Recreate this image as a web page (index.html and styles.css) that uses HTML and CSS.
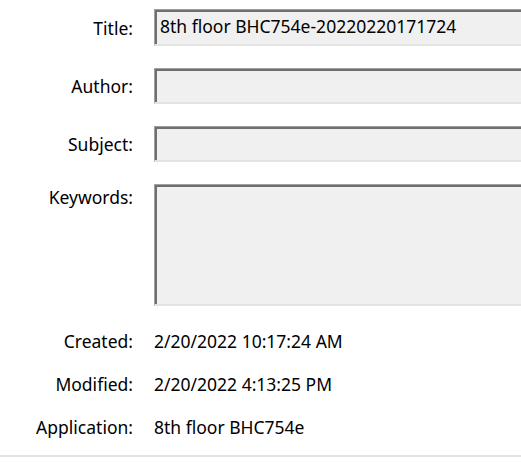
FILE: index.html
```html
<!DOCTYPE html>
<html>
<head>
<meta charset="utf-8">
<link rel="stylesheet" href="styles.css">
</head>
<body>
<div class="props">
  <div class="row field-row">
    <div class="label">Title:</div>
    <div class="box">8th floor BHC754e-20220220171724</div>
  </div>
  <div class="row field-row">
    <div class="label">Author:</div>
    <div class="box"></div>
  </div>
  <div class="row field-row">
    <div class="label">Subject:</div>
    <div class="box"></div>
  </div>
  <div class="row area-row">
    <div class="label">Keywords:</div>
    <div class="box area"></div>
  </div>
  <div class="info">
    <div class="row info-row">
      <div class="label">Created:</div>
      <div class="value">2/20/2022 10:17:24 AM</div>
    </div>
    <div class="row info-row">
      <div class="label">Modified:</div>
      <div class="value">2/20/2022 4:13:25 PM</div>
    </div>
    <div class="row info-row">
      <div class="label">Application:</div>
      <div class="value">8th floor BHC754e</div>
    </div>
  </div>
  <div class="divider"></div>
</div>
</body>
</html>
```
FILE: styles.css
```css
html, body {
  margin: 0;
  padding: 0;
  background: #ffffff;
  overflow: hidden;
}
body {
  width: 521px;
  height: 471px;
  font-family: "Noto Sans", "Open Sans", sans-serif;
  font-size: 17.5px;
  color: #000;
}
.props {
  display: flex;
  flex-direction: column;
  padding-top: 9px;
  gap: 22px;
}
.row {
  display: flex;
  gap: 21px;
}
.label {
  width: 133px;
  flex: none;
  text-align: right;
  line-height: 24px;
}
.field-row {
  height: 36px;
  align-items: center;
}
.field-row:first-child {
  height: 37px;
}
.box {
  flex: 1;
  min-width: 0;
  height: 100%;
  box-sizing: border-box;
  background: #f0f0f0;
  border-top: 1px solid #a0a0a0;
  border-left: 1px solid #a0a0a0;
  border-bottom: 2px solid #e3e3e3;
  border-right: none;
  box-shadow: inset 2px 2px 0 #6f6f6f;
  padding: 0 0 0 5px;
  line-height: 32px;
  white-space: nowrap;
  overflow: hidden;
}
.area-row {
  height: 122px;
  align-items: flex-start;
}
.area-row .label {
  padding-top: 1px;
}
.info {
  display: flex;
  flex-direction: column;
  gap: 19px;
  margin-top: 1px;
}
.info-row {
  height: 24px;
}
.value {
  line-height: 24px;
  white-space: nowrap;
}
.divider {
  height: 2px;
  background: #e3e3e3;
  margin-top: -6px;
}
```
